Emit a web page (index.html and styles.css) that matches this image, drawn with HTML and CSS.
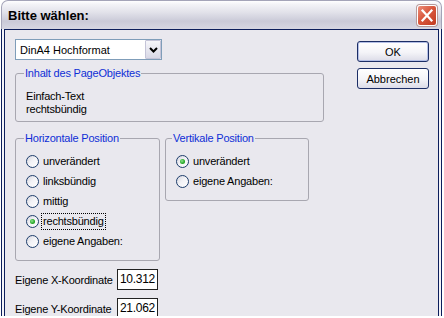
FILE: index.html
```html
<!DOCTYPE html>
<html lang="de">
<head>
<meta charset="utf-8">
<title>Bitte wählen:</title>
<link rel="stylesheet" href="styles.css">
</head>
<body>
<div class="window">
  <div class="titlebar">
    <span class="title">Bitte wählen:</span>
    <span class="close">
      <svg width="18" height="19" viewBox="0 0 18 19"><path d="M4.5 4.5 L13.5 14.5 M13.5 4.5 L4.5 14.5" stroke="#fff" stroke-width="2.2" stroke-linecap="square" fill="none"/></svg>
    </span>
  </div>
  <div class="frame">
    <div class="content">
      <div class="main">
        <div class="combo">
          <span class="combo-text">DinA4 Hochformat</span>
          <span class="combo-btn"><svg width="9" height="6" viewBox="0 0 9 6"><path d="M1 1 L4.5 4.5 L8 1" stroke="#000" stroke-width="2" fill="none"/></svg></span>
        </div>
        <fieldset class="group group-info">
          <legend>Inhalt des PageObjektes</legend>
          <div class="line">Einfach-Text</div>
          <div class="line">rechtsbündig</div>
        </fieldset>
        <div class="pos-row">
          <fieldset class="group group-h">
            <legend>Horizontale Position</legend>
            <div class="radio-row"><span class="radio"></span><span>unverändert</span></div>
            <div class="radio-row"><span class="radio"></span><span>linksbündig</span></div>
            <div class="radio-row"><span class="radio"></span><span>mittig</span></div>
            <div class="radio-row"><span class="radio checked"><span class="dot"></span></span><span class="focus">rechtsbündig</span></div>
            <div class="radio-row"><span class="radio"></span><span>eigene Angaben:</span></div>
          </fieldset>
          <fieldset class="group group-v">
            <legend>Vertikale Position</legend>
            <div class="radio-row"><span class="radio checked"><span class="dot"></span></span><span>unverändert</span></div>
            <div class="radio-row"><span class="radio"></span><span>eigene Angaben:</span></div>
          </fieldset>
        </div>
        <div class="coord-row"><span class="coord-label">Eigene X-Koordinate</span><span class="field">10.312</span></div>
        <div class="coord-row"><span class="coord-label">Eigene Y-Koordinate</span><span class="field">21.062</span></div>
      </div>
      <div class="buttons">
        <button class="btn btn-default">OK</button>
        <button class="btn">Abbrechen</button>
      </div>
    </div>
  </div>
</div>
</body>
</html>
```

FILE: styles.css
```css
* { box-sizing: border-box; }
body {
  margin: 0;
  background: #ffffff;
  font-family: "Liberation Sans", Arial, sans-serif;
  font-size: 11px;
  letter-spacing: -0.2px;
  color: #000;
}
.window {
  width: 441px;
  height: 316px;
  margin-left: 1px;
  display: flex;
  flex-direction: column;
}
.titlebar {
  height: 29px;
  flex: none;
  border: 1px solid #a4a4b8;
  border-bottom: 0;
  border-radius: 7px 7px 0 0;
  background: linear-gradient(to bottom, #ffffff 0%, #f3f3f7 12%, #e2e2ea 40%, #cacad8 72%, #d6d6e2 100%);
  display: flex;
  align-items: center;
  justify-content: space-between;
  padding: 0 4px 0 6px;
}
.title {
  font-weight: bold;
  font-size: 13px;
  letter-spacing: 0;
  color: #000;
}
.close {
  width: 20px;
  height: 21px;
  border: 1px solid #fff;
  border-radius: 3px;
  background: linear-gradient(135deg, #ec8f7c 0%, #d9583d 45%, #c23a20 100%);
  box-shadow: 0 0 0 1px #b59a9a;
  display: flex;
  align-items: center;
  justify-content: center;
}
.frame {
  flex: 1;
  border: 1px solid #0c1e5c;
  border-top: 0;
  background: #f4f4f8;
  padding: 0 2px 2px;
}
.content {
  height: 100%;
  border: 1px solid #0c1e5c;
  background: #e9e8ee;
  display: flex;
  gap: 33px;
  padding: 9px 0 0 10px;
  overflow: hidden;
}
.main {
  width: 309px;
  flex: none;
  display: flex;
  flex-direction: column;
}
.combo {
  width: 147px;
  height: 21px;
  border: 1px solid #7f9db9;
  background: #fff;
  display: flex;
  align-items: center;
  justify-content: space-between;
  padding: 0 0 0 4px;
  font-size: 11px;
  letter-spacing: 0;
}
.combo-btn {
  width: 16px;
  height: 19px;
  border: 1px solid #c4c4d8;
  border-radius: 1px;
  background: linear-gradient(to bottom, #f6f6fa, #d8d8e6);
  display: flex;
  align-items: center;
  justify-content: center;
}
.group {
  margin: 0;
  min-width: 0;
  border: 1px solid #a8a7b0;
  border-radius: 3px;
}
.group legend {
  color: #0f2fd6;
  line-height: 13px;
  padding: 0 1px;
  margin-left: -2px;
}
.group-info {
  margin-top: 7px;
  padding: 10px 10px 5px 10px;
}
.line { line-height: 13px; }
.pos-row {
  display: flex;
  align-items: flex-start;
  gap: 5px;
  margin-top: 10px;
}
.group-h {
  width: 145px;
  padding: 6px 10px 9px 10px;
}
.group-v {
  width: 144px;
  padding: 6px 10px 9px 10px;
}
.group-v legend { margin-left: -4px; }
.radio-row {
  height: 20px;
  display: flex;
  align-items: center;
  gap: 4px;
}
.radio {
  width: 13px;
  height: 13px;
  flex: none;
  border-radius: 50%;
  border: 1px solid #1d3d6b;
  background: linear-gradient(135deg, #d4d4de 0%, #f2f2f6 45%, #ffffff 100%);
  display: flex;
  align-items: center;
  justify-content: center;
}
.dot {
  width: 5px;
  height: 5px;
  border-radius: 50%;
  background: radial-gradient(circle at 40% 40%, #8ee48e 0%, #25a625 60%, #1a8a1a 100%);
}
.focus {
  border: 1px dotted #000;
  padding: 0 1px;
  line-height: 15px;
  margin-left: -2px;
}
.coord-row {
  display: flex;
  align-items: center;
  height: 21px;
  margin-top: 8px;
}
.coord-label { width: 102px; flex: none; }
.field {
  width: 41px;
  height: 21px;
  border: 1px solid #222;
  background: #fff;
  padding: 0 2px;
  font-size: 12px;
  letter-spacing: -0.3px;
  line-height: 19px;
}
.buttons {
  display: flex;
  flex-direction: column;
  gap: 6px;
  padding-top: 2px;
}
.btn {
  width: 72px;
  height: 21px;
  padding: 0;
  border: 1px solid #1c2e66;
  border-radius: 3px;
  background: linear-gradient(to bottom, #ffffff 0%, #f4f4f8 55%, #dcdce8 100%);
  font-family: "Liberation Sans", Arial, sans-serif;
  font-size: 11px;
  letter-spacing: 0;
  color: #000;
}
.btn-default {
  box-shadow: inset 0 0 0 1px #b4bfe6;
}
```
